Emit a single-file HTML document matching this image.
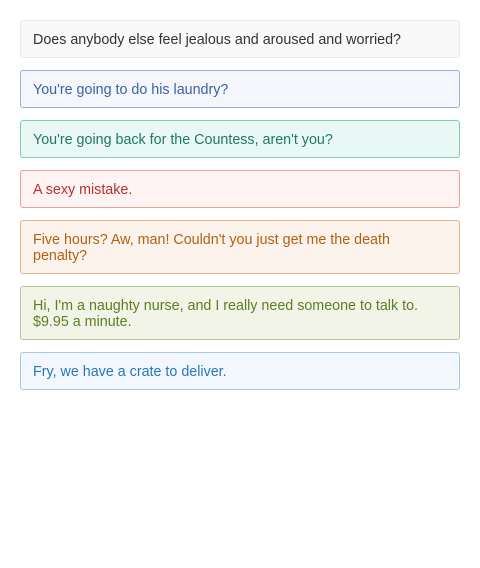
<!DOCTYPE html>
<html><head><style>
body{margin:0;background:#fff;font-family:"Liberation Sans",sans-serif;font-size:14.3px;line-height:16px}
.wrap{padding:20px 20px 0 20px}
.b{border:1px solid;border-radius:3px;padding:11px 14px 9px 12px;margin-bottom:12px}
.g{background:#f9f9f9;border-color:#eaeaea;color:#333}
.p{background:#f4f6fb;border-color:#9eb2d9;color:#3b62a8}
.t{background:#eaf8f5;border-color:#82ccb6;color:#1f7a5f}
.r{background:#fdf3f2;border-color:#e3a29a;color:#b7342a}
.o{background:#fcf3ec;border-color:#e5b48b;color:#b35f14}
.gr{background:#f1f4e7;border-color:#b8c793;color:#5f7d24}
.bl{background:#f1f7fc;border-color:#a9c9e4;color:#2878b8}
</style></head><body><div class="wrap">
<div class="b g">Does anybody else feel jealous and aroused and worried?</div>
<div class="b p">You're going to do his laundry?</div>
<div class="b t">You're going back for the Countess, aren't you?</div>
<div class="b r">A sexy mistake.</div>
<div class="b o">Five hours? Aw, man! Couldn't you just get me the death<br>penalty?</div>
<div class="b gr">Hi, I'm a naughty nurse, and I really need someone to talk to. $9.95 a minute.</div>
<div class="b bl">Fry, we have a crate to deliver.</div>
</div></body></html>
